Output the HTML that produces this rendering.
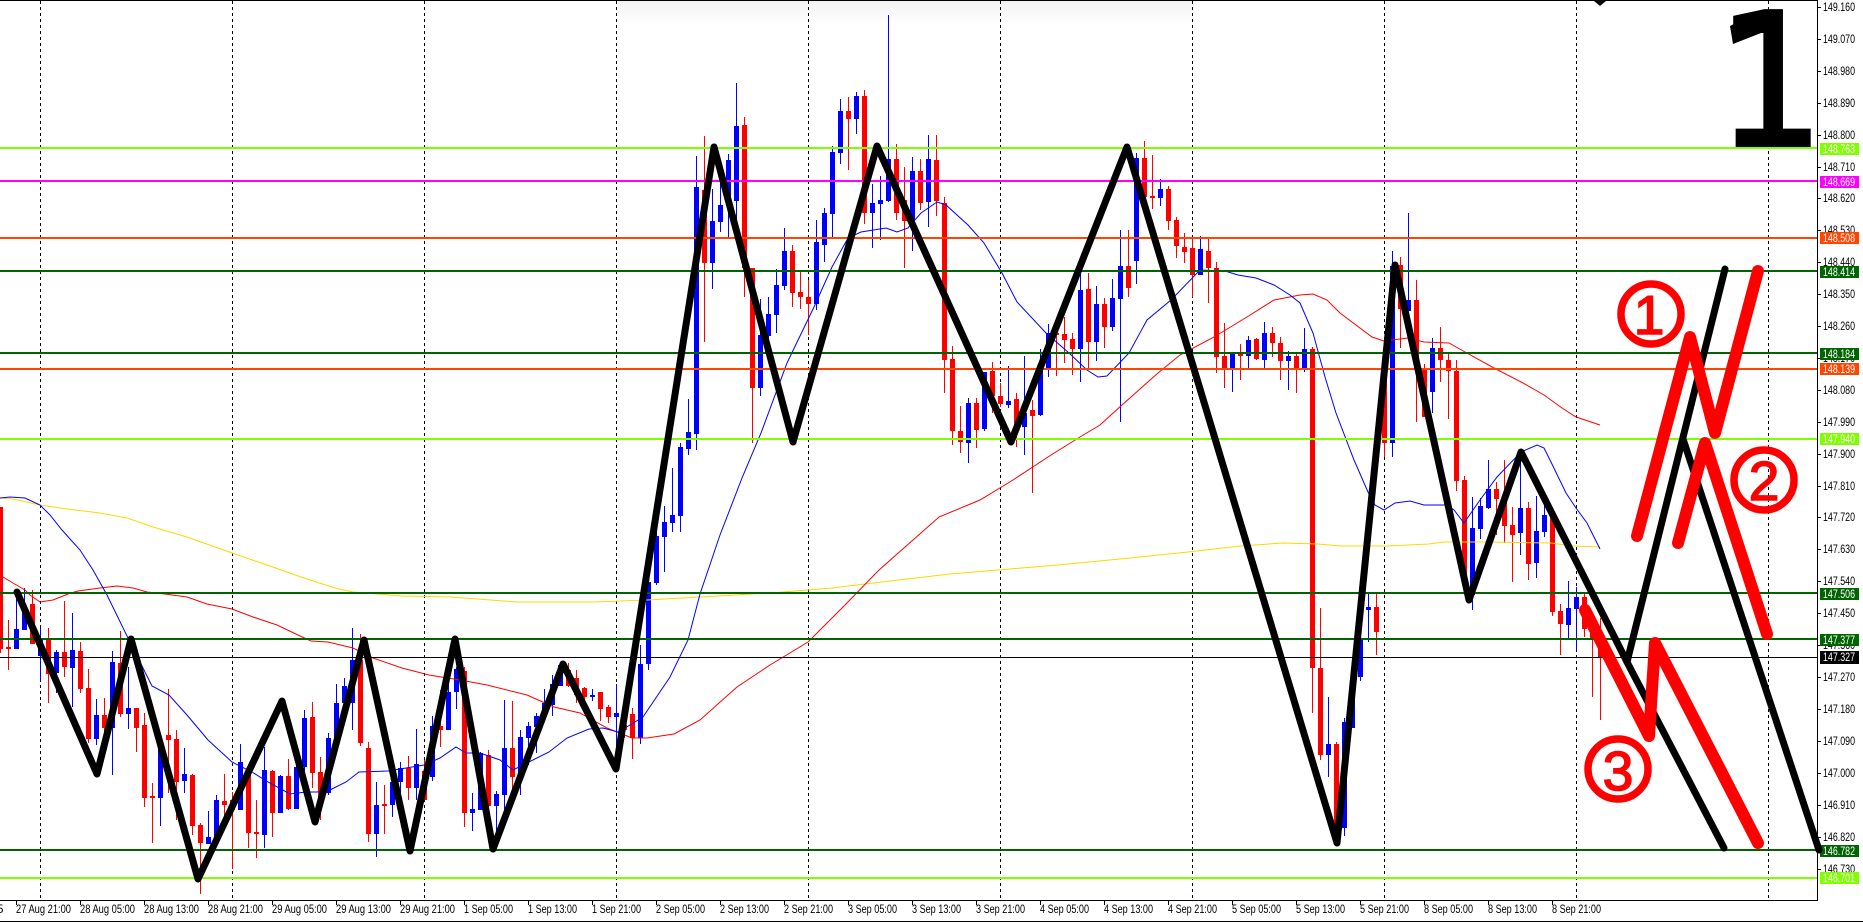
<!DOCTYPE html>
<html><head><meta charset="utf-8"><title>Chart</title>
<style>
html,body{margin:0;padding:0;background:#fff;width:1863px;height:922px;overflow:hidden}
svg{display:block}
text{font-family:"Liberation Sans",sans-serif}
.p text{font-size:11.5px;fill:#000}
.b text{font-size:11.5px;fill:#fff}
.t text{font-size:11.5px;fill:#000}
.c text{font-size:55px;fill:#f00;stroke:#f00;stroke-width:1.6px;text-anchor:middle}
</style></head><body>
<svg xmlns="http://www.w3.org/2000/svg" width="1863" height="922" viewBox="0 0 1863 922">
<defs><linearGradient id="g" x1="0" y1="0" x2="0" y2="1"><stop offset="0" stop-color="#f2f2f2"/><stop offset="1" stop-color="#fff"/></linearGradient></defs>
<rect width="1863" height="922" fill="#fff"/>
<rect x="618" y="1" width="576" height="24" fill="url(#g)"/>
<!-- grid -->
<path fill="none" stroke="#000" stroke-dasharray="3 3" d="M40.5 1V898M232.5 1V898M424.5 1V898M616.5 1V898M808.5 1V898M1000.5 1V898M1192.5 1V898M1384.5 1V898M1576.5 1V898M1768.5 1V898"/>
<!-- candles: red wicks -->
<path fill="none" stroke="#f00" d="M0.5 507V653M8.5 620V670M32.5 590V644M48.5 628V703M64.5 601V677M80.5 642V693M88.5 669V743M104.5 698V733M120.5 631V717M136.5 708V752M144.5 713V807M152.5 783V843M168.5 689V793M176.5 730V820M192.5 774V835M200.5 823V894M224.5 774V827M232.5 792V869M248.5 770V848M256.5 800V858M272.5 770V837M288.5 759V810M312.5 702V788M320.5 757V820M360.5 634V746M368.5 742V842M384.5 785V834M408.5 756V800M424.5 760V800M440.5 690V747M464.5 667V827M488.5 750V827M512.5 701V793M568.5 663V687M576.5 670V703M584.5 687V705M600.5 692V721M608.5 705V723M624.5 723V738M632.5 708V759M704.5 136V342M744.5 117V297M752.5 268V443M792.5 245V307M800.5 272V309M808.5 280V335M848.5 97V170M864.5 90V224M896.5 144V220M904.5 167V268M920.5 159V210M936.5 135V216M944.5 197V393M952.5 346V445M960.5 406V453M976.5 398V448M992.5 362V413M1000.5 383V407M1016.5 393V447M1032.5 400V493M1056.5 328V376M1064.5 317V363M1072.5 333V375M1088.5 273V370M1104.5 298V348M1128.5 230V297M1144.5 141V197M1152.5 155V209M1168.5 186V230M1176.5 217V258M1184.5 233V263M1192.5 238V297M1208.5 238V303M1216.5 262V373M1224.5 323V388M1240.5 344V380M1256.5 338V360M1272.5 327V357M1280.5 337V380M1296.5 353V393M1312.5 347V713M1320.5 608V760M1336.5 742V835M1376.5 593V655M1384.5 350V457M1400.5 257V348M1416.5 280V422M1424.5 364V417M1440.5 327V382M1448.5 354V419M1456.5 360V491M1464.5 476V590M1496.5 482V535M1504.5 460V543M1512.5 507V582M1528.5 502V580M1552.5 515V616M1560.5 604V655M1584.5 594V637M1592.5 627V697M1600.5 618V720"/>
<!-- red bodies -->
<path fill="none" stroke="#f00" stroke-width="5" d="M0.5 507V649M8.5 647V649M32.5 604V644M48.5 640V674M64.5 652V667M80.5 651V689M88.5 688V739M104.5 715V728M120.5 663V714M136.5 708V728M144.5 725V798M152.5 796V798M168.5 735V740M176.5 739V782M192.5 775V826M200.5 825V843M224.5 801V805M232.5 800V810M248.5 770V833M256.5 832V834M272.5 771V813M288.5 776V809M312.5 717V773M320.5 772V805M360.5 660V743M368.5 748V834M384.5 804V806M408.5 768V788M424.5 771V800M440.5 726V730M464.5 671V813M488.5 755V806M512.5 748V777M568.5 670V686M576.5 678V695M584.5 688V697M600.5 692V709M608.5 707V717M624.5 725V730M632.5 714V738M704.5 190V263M744.5 125V268M752.5 268V388M792.5 251V293M800.5 292V297M808.5 297V304M848.5 111V119M864.5 96V213M896.5 159V213M904.5 200V221M920.5 171V203M936.5 160V201M944.5 203V360M952.5 359V431M960.5 431V442M976.5 403V430M992.5 371V396M1000.5 396V404M1016.5 399V427M1032.5 410V416M1056.5 333V335M1064.5 334V340M1072.5 339V349M1088.5 289V342M1104.5 304V327M1128.5 266V288M1144.5 158V197M1152.5 196V198M1168.5 189V221M1176.5 220V246M1184.5 247V252M1192.5 248V275M1208.5 251V268M1216.5 268V357M1224.5 356V368M1240.5 354V356M1256.5 339V359M1272.5 333V343M1280.5 343V361M1296.5 356V368M1312.5 349V668M1320.5 668V755M1336.5 744V830M1376.5 607V632M1384.5 366V443M1400.5 265V309M1416.5 300V370M1424.5 369V417M1440.5 348V360M1448.5 360V371M1456.5 371V481M1464.5 480V585M1496.5 489V499M1504.5 503V526M1512.5 525V535M1528.5 508V564M1552.5 517V612M1560.5 611V624M1584.5 597V629M1592.5 628V640M1600.5 637V657"/>
<!-- blue wicks -->
<path fill="none" stroke="#00f" d="M16.5 593V649M24.5 588V630M40.5 628V681M56.5 650V693M72.5 613V707M96.5 699V745M112.5 651V775M128.5 667V729M160.5 737V826M184.5 748V793M208.5 811V844M216.5 795V837M240.5 744V810M264.5 747V848M280.5 775V813M296.5 753V809M304.5 710V793M328.5 733V795M336.5 684V745M344.5 678V723M352.5 628V730M376.5 782V857M392.5 770V817M400.5 762V798M416.5 729V800M432.5 716V781M448.5 669V730M456.5 667V709M472.5 793V831M480.5 752V810M496.5 791V837M504.5 700V810M520.5 730V795M528.5 722V765M536.5 713V753M544.5 689V716M552.5 675V716M560.5 663V686M592.5 689V701M616.5 684V753M640.5 645V744M648.5 580V670M656.5 520V585M664.5 506V572M672.5 468V532M680.5 443V532M688.5 399V455M696.5 156V450M712.5 189V289M720.5 180V232M728.5 154V237M736.5 83V237M760.5 299V396M768.5 297V345M776.5 269V333M784.5 228V290M816.5 220V310M824.5 208V262M832.5 146V237M840.5 99V164M856.5 92V134M872.5 184V248M880.5 176V240M888.5 15V202M912.5 157V251M928.5 135V227M968.5 398V463M984.5 372V431M1008.5 366V408M1024.5 356V455M1040.5 349V416M1048.5 324V377M1080.5 273V382M1096.5 286V361M1112.5 279V331M1120.5 230V422M1136.5 153V284M1160.5 179V206M1200.5 236V275M1232.5 353V392M1248.5 336V368M1264.5 322V368M1288.5 351V390M1304.5 328V372M1328.5 697V777M1344.5 718V836M1352.5 677V728M1360.5 627V681M1368.5 593V642M1392.5 251V457M1408.5 213V311M1432.5 338V413M1472.5 497V610M1480.5 498V539M1488.5 460V509M1520.5 460V555M1536.5 496V578M1544.5 505V537M1568.5 581V638M1576.5 587V650"/>
<!-- blue bodies -->
<path fill="none" stroke="#00f" stroke-width="5" d="M16.5 629V649M24.5 607V630M40.5 640V656M56.5 652V673M72.5 650V668M96.5 715V739M112.5 662V728M128.5 708V714M160.5 745V798M184.5 774V781M208.5 837V844M216.5 800V837M240.5 762V810M264.5 770V835M280.5 776V813M296.5 767V809M304.5 718V767M328.5 738V793M336.5 703V740M344.5 686V703M352.5 660V703M376.5 805V834M392.5 782V805M400.5 768V782M416.5 764V788M432.5 726V777M448.5 692V730M456.5 669V692M472.5 809V813M480.5 753V810M496.5 794V806M504.5 748V795M520.5 737V777M528.5 726V738M536.5 716V727M544.5 703V716M552.5 684V705M560.5 665V686M592.5 695V697M616.5 713V717M640.5 664V738M648.5 582V664M656.5 536V583M664.5 522V537M672.5 515V523M680.5 447V516M688.5 432V449M696.5 187V434M712.5 221V263M720.5 205V222M728.5 160V200M736.5 126V201M760.5 335V388M768.5 314V336M776.5 285V315M784.5 251V286M816.5 242V304M824.5 213V245M832.5 152V214M840.5 111V153M856.5 96V119M872.5 203V213M880.5 200V204M888.5 159V201M912.5 171V220M928.5 159V202M968.5 403V443M984.5 372V429M1008.5 401V405M1024.5 413V427M1040.5 365V415M1048.5 333V368M1080.5 290V349M1096.5 304V342M1112.5 298V327M1120.5 266V299M1136.5 158V261M1160.5 189V198M1200.5 249V275M1232.5 354V368M1248.5 340V356M1264.5 333V360M1288.5 356V361M1304.5 349V368M1328.5 744V755M1344.5 722V828M1352.5 690V728M1360.5 640V677M1368.5 607V610M1392.5 266V443M1408.5 300V311M1432.5 348V392M1472.5 528V595M1480.5 506V529M1488.5 489V508M1520.5 508V533M1536.5 531V563M1544.5 515V532M1568.5 608V625M1576.5 597V609"/>
<!-- moving averages -->
<polyline fill="none" stroke="#ffd700" points="0,498 13,499 40,505 67,509 100,513 127,518 153,527 187,537 232,553 267,565 301,577 335,588 353,592 402,596 451,597 518,602 594,602 647,600 700,597 770,593 832,588 890,581 950,574 1010,569 1069,564 1130,558 1188,552 1240,546 1283,543 1318,544 1341,546 1386,546 1429,544 1444,542 1487,542 1551,543 1573,546 1600,547"/>
<polyline fill="none" stroke="#f00" points="3,577 13,583 25,590 30,595 40,602 53,600 68,594 78,591 100,588 117,586 133,588 147,592 165,594 187,597 207,604 232,609 253,617 277,625 300,636 311,641 328,642 353,648 373,658 402,668 429,675 460,680 487,685 527,695 554,707 580,713 607,728 632,738 647,738 674,734 700,720 737,687 770,665 808,642 845,605 879,570 939,517 980,500 1013,480 1051,455 1080,437 1100,425 1122,405 1158,373 1180,355 1214,337 1247,317 1274,300 1300,295 1313,294 1327,300 1340,313 1372,337 1384,341 1408,338 1424,342 1449,343 1465,352 1494,368 1523,383 1544,395 1562,408 1576,417 1600,425"/>
<polyline fill="none" stroke="#00f" points="0,498 10,497 25,498 40,505 50,515 62,530 80,550 93,570 107,595 128,638 152,686 169,695 187,715 208,740 232,762 252,772 268,782 290,794 306,792 317,792 330,790 346,782 359,772 388,771 406,768 424,765 440,758 456,747 466,753 480,753 500,760 513,770 527,763 549,752 567,738 589,729 603,728 618,732 630,725 643,717 670,677 688,640 700,594 720,535 742,478 761,433 787,363 814,307 832,267 848,238 861,232 886,228 897,232 908,228 921,213 937,202 946,205 968,225 984,243 1002,273 1017,302 1046,333 1069,353 1087,370 1098,377 1107,376 1129,353 1147,320 1171,300 1200,270 1225,271 1238,275 1256,278 1274,285 1290,295 1300,303 1313,333 1325,377 1336,413 1354,460 1368,492 1375,505 1384,510 1395,503 1410,501 1424,505 1447,505 1454,510 1464,523 1480,500 1497,477 1521,452 1537,445 1544,448 1550,460 1566,493 1576,508 1587,523 1600,549"/>
<!-- horizontal levels -->
<g fill="#7fff00"><rect y="147" width="1817" height="2"/><rect y="438" width="1817" height="2"/><rect y="877" width="1817" height="2"/></g>
<rect y="180" width="1817" height="2" fill="#f0f"/>
<g fill="#ff4500"><rect y="237" width="1817" height="2"/><rect y="368" width="1817" height="2"/></g>
<g fill="#006400"><rect y="270" width="1817" height="2"/><rect y="352" width="1817" height="2"/><rect y="592" width="1817" height="2"/><rect y="638" width="1817" height="2"/><rect y="849" width="1817" height="2"/></g>
<rect y="657" width="1817" height="1" fill="#000"/>
<!-- frame -->
<path fill="none" stroke="#000" d="M0 .5H1817.5V900.5H0M0 921.5H1863"/>
<path fill="#000" d="M1594 1H1606L1600 6Z"/>
<!-- axis ticks -->
<path fill="none" stroke="#000" d="M1817 7.5h4M1817 39.5h4M1817 71.5h4M1817 103.5h4M1817 135.5h4M1817 167.5h4M1817 198.5h4M1817 230.5h4M1817 262.5h4M1817 294.5h4M1817 326.5h4M1817 358.5h4M1817 390.5h4M1817 422.5h4M1817 454.5h4M1817 486.5h4M1817 517.5h4M1817 549.5h4M1817 581.5h4M1817 613.5h4M1817 645.5h4M1817 677.5h4M1817 709.5h4M1817 741.5h4M1817 773.5h4M1817 805.5h4M1817 837.5h4M1817 869.5h4M16.5 901v4M80.5 901v4M144.5 901v4M208.5 901v4M272.5 901v4M336.5 901v4M400.5 901v4M464.5 901v4M528.5 901v4M592.5 901v4M656.5 901v4M720.5 901v4M784.5 901v4M848.5 901v4M912.5 901v4M976.5 901v4M1040.5 901v4M1104.5 901v4M1168.5 901v4M1232.5 901v4M1296.5 901v4M1360.5 901v4M1424.5 901v4M1488.5 901v4M1552.5 901v4"/>
<!-- price labels -->
<g class="p">
<text x="1823" y="11" textLength="32" lengthAdjust="spacingAndGlyphs">149.160</text>
<text x="1823" y="43" textLength="32" lengthAdjust="spacingAndGlyphs">149.070</text>
<text x="1823" y="75" textLength="32" lengthAdjust="spacingAndGlyphs">148.980</text>
<text x="1823" y="107" textLength="32" lengthAdjust="spacingAndGlyphs">148.890</text>
<text x="1823" y="139" textLength="32" lengthAdjust="spacingAndGlyphs">148.800</text>
<text x="1823" y="171" textLength="32" lengthAdjust="spacingAndGlyphs">148.710</text>
<text x="1823" y="202" textLength="32" lengthAdjust="spacingAndGlyphs">148.620</text>
<text x="1823" y="234" textLength="32" lengthAdjust="spacingAndGlyphs">148.530</text>
<text x="1823" y="266" textLength="32" lengthAdjust="spacingAndGlyphs">148.440</text>
<text x="1823" y="298" textLength="32" lengthAdjust="spacingAndGlyphs">148.350</text>
<text x="1823" y="330" textLength="32" lengthAdjust="spacingAndGlyphs">148.260</text>
<text x="1823" y="362" textLength="32" lengthAdjust="spacingAndGlyphs">148.170</text>
<text x="1823" y="394" textLength="32" lengthAdjust="spacingAndGlyphs">148.080</text>
<text x="1823" y="426" textLength="32" lengthAdjust="spacingAndGlyphs">147.990</text>
<text x="1823" y="458" textLength="32" lengthAdjust="spacingAndGlyphs">147.900</text>
<text x="1823" y="490" textLength="32" lengthAdjust="spacingAndGlyphs">147.810</text>
<text x="1823" y="521" textLength="32" lengthAdjust="spacingAndGlyphs">147.720</text>
<text x="1823" y="553" textLength="32" lengthAdjust="spacingAndGlyphs">147.630</text>
<text x="1823" y="585" textLength="32" lengthAdjust="spacingAndGlyphs">147.540</text>
<text x="1823" y="617" textLength="32" lengthAdjust="spacingAndGlyphs">147.450</text>
<text x="1823" y="649" textLength="32" lengthAdjust="spacingAndGlyphs">147.360</text>
<text x="1823" y="681" textLength="32" lengthAdjust="spacingAndGlyphs">147.270</text>
<text x="1823" y="713" textLength="32" lengthAdjust="spacingAndGlyphs">147.180</text>
<text x="1823" y="745" textLength="32" lengthAdjust="spacingAndGlyphs">147.090</text>
<text x="1823" y="777" textLength="32" lengthAdjust="spacingAndGlyphs">147.000</text>
<text x="1823" y="809" textLength="32" lengthAdjust="spacingAndGlyphs">146.910</text>
<text x="1823" y="841" textLength="32" lengthAdjust="spacingAndGlyphs">146.820</text>
<text x="1823" y="873" textLength="32" lengthAdjust="spacingAndGlyphs">146.730</text>
</g>
<!-- boxed labels -->
<g fill="#7fff00"><rect x="1820" y="143" width="39" height="12"/><rect x="1820" y="433" width="39" height="12"/><rect x="1820" y="872" width="39" height="12"/></g>
<rect x="1820" y="176" width="39" height="12" fill="#f0f"/>
<g fill="#ff4500"><rect x="1820" y="232" width="39" height="12"/><rect x="1820" y="363" width="39" height="12"/></g>
<g fill="#006400"><rect x="1820" y="266" width="39" height="12"/><rect x="1820" y="348" width="39" height="12"/><rect x="1820" y="588" width="39" height="12"/><rect x="1820" y="634" width="39" height="12"/><rect x="1820" y="845" width="39" height="12"/></g>
<rect x="1820" y="651" width="39" height="13" fill="#000"/>
<g class="b">
<text x="1823" y="153" textLength="32" lengthAdjust="spacingAndGlyphs">148.763</text>
<text x="1823" y="186" textLength="32" lengthAdjust="spacingAndGlyphs">148.669</text>
<text x="1823" y="242" textLength="32" lengthAdjust="spacingAndGlyphs">148.508</text>
<text x="1823" y="276" textLength="32" lengthAdjust="spacingAndGlyphs">148.414</text>
<text x="1823" y="358" textLength="32" lengthAdjust="spacingAndGlyphs">148.184</text>
<text x="1823" y="373" textLength="32" lengthAdjust="spacingAndGlyphs">148.139</text>
<text x="1823" y="443" textLength="32" lengthAdjust="spacingAndGlyphs">147.940</text>
<text x="1823" y="598" textLength="32" lengthAdjust="spacingAndGlyphs">147.506</text>
<text x="1823" y="644" textLength="32" lengthAdjust="spacingAndGlyphs">147.377</text>
<text x="1823" y="661" textLength="32" lengthAdjust="spacingAndGlyphs">147.327</text>
<text x="1823" y="855" textLength="32" lengthAdjust="spacingAndGlyphs">146.782</text>
<text x="1823" y="882" textLength="32" lengthAdjust="spacingAndGlyphs">146.701</text>
</g>
<!-- time labels -->
<g class="t">
<text x="-3" y="913">5</text>
<text x="16" y="913" textLength="55" lengthAdjust="spacingAndGlyphs">27 Aug 21:00</text>
<text x="80" y="913" textLength="55" lengthAdjust="spacingAndGlyphs">28 Aug 05:00</text>
<text x="144" y="913" textLength="55" lengthAdjust="spacingAndGlyphs">28 Aug 13:00</text>
<text x="208" y="913" textLength="55" lengthAdjust="spacingAndGlyphs">28 Aug 21:00</text>
<text x="272" y="913" textLength="55" lengthAdjust="spacingAndGlyphs">29 Aug 05:00</text>
<text x="336" y="913" textLength="55" lengthAdjust="spacingAndGlyphs">29 Aug 13:00</text>
<text x="400" y="913" textLength="55" lengthAdjust="spacingAndGlyphs">29 Aug 21:00</text>
<text x="464" y="913" textLength="49" lengthAdjust="spacingAndGlyphs">1 Sep 05:00</text>
<text x="528" y="913" textLength="49" lengthAdjust="spacingAndGlyphs">1 Sep 13:00</text>
<text x="592" y="913" textLength="49" lengthAdjust="spacingAndGlyphs">1 Sep 21:00</text>
<text x="656" y="913" textLength="49" lengthAdjust="spacingAndGlyphs">2 Sep 05:00</text>
<text x="720" y="913" textLength="49" lengthAdjust="spacingAndGlyphs">2 Sep 13:00</text>
<text x="784" y="913" textLength="49" lengthAdjust="spacingAndGlyphs">2 Sep 21:00</text>
<text x="848" y="913" textLength="49" lengthAdjust="spacingAndGlyphs">3 Sep 05:00</text>
<text x="912" y="913" textLength="49" lengthAdjust="spacingAndGlyphs">3 Sep 13:00</text>
<text x="976" y="913" textLength="49" lengthAdjust="spacingAndGlyphs">3 Sep 21:00</text>
<text x="1040" y="913" textLength="49" lengthAdjust="spacingAndGlyphs">4 Sep 05:00</text>
<text x="1104" y="913" textLength="49" lengthAdjust="spacingAndGlyphs">4 Sep 13:00</text>
<text x="1168" y="913" textLength="49" lengthAdjust="spacingAndGlyphs">4 Sep 21:00</text>
<text x="1232" y="913" textLength="49" lengthAdjust="spacingAndGlyphs">5 Sep 05:00</text>
<text x="1296" y="913" textLength="49" lengthAdjust="spacingAndGlyphs">5 Sep 13:00</text>
<text x="1360" y="913" textLength="49" lengthAdjust="spacingAndGlyphs">5 Sep 21:00</text>
<text x="1424" y="913" textLength="49" lengthAdjust="spacingAndGlyphs">8 Sep 05:00</text>
<text x="1488" y="913" textLength="49" lengthAdjust="spacingAndGlyphs">8 Sep 13:00</text>
<text x="1552" y="913" textLength="49" lengthAdjust="spacingAndGlyphs">8 Sep 21:00</text>
</g>
<!-- black zigzags -->
<g fill="none" stroke="#000" stroke-width="7" stroke-linecap="round" stroke-linejoin="round">
<polyline points="17,592 97,774 131,639 198,879 282,701 315,822 364,640 410,851 455,639 493,849 563,664 616,769 714,147 793,442 877,146 1011,442 1127,147 1337,843 1395,265 1469,600 1521,452 1627,662 1725,269"/>
<polyline points="1627,662 1724,848"/>
<polyline points="1683,439 1819,850"/>
</g>
<!-- red strokes -->
<g fill="none" stroke="#f00" stroke-width="12" stroke-linecap="round" stroke-linejoin="round">
<polyline points="1637,536 1690,337 1715,433 1758,271"/>
<polyline points="1678,543 1705,443 1767,634"/>
<polyline points="1585,610 1649,736 1655,643 1758,843"/>
</g>
<!-- circled numbers -->
<g fill="none" stroke="#f00" stroke-width="7.5"><circle cx="1651" cy="314" r="30"/><circle cx="1764" cy="480" r="30"/><circle cx="1618" cy="769" r="30"/></g>
<g class="c">
<text x="1649" y="334">1</text>
<text x="1764" y="500">2</text>
<text x="1618" y="790">3</text>
</g>
<!-- big number -->
<text transform="translate(1715.7 145.5) scale(.93 1)" font-size="185" style="font-family:'DejaVu Sans',sans-serif" fill="#000" stroke="#000" stroke-width="3">1</text>
<polygon points="1730,26 1761,10 1768,10 1768,33 1761,33 1733,44" fill="#000"/>
</svg>
</body></html>
